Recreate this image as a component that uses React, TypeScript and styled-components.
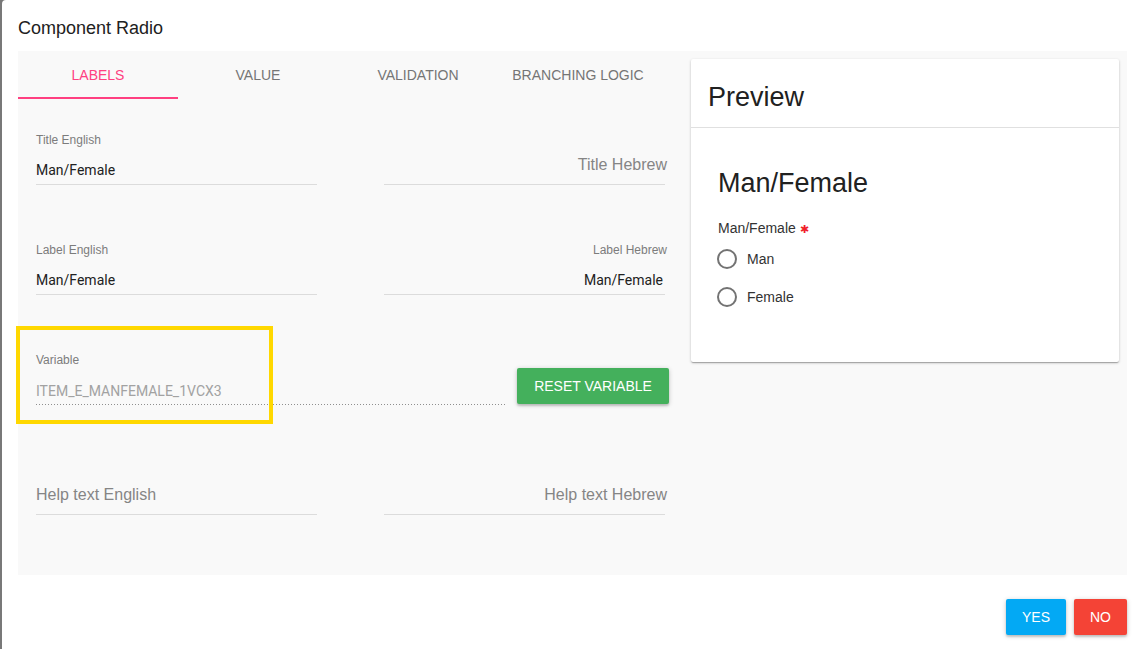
import React from "react";
import styled, { createGlobalStyle } from "styled-components";

const GlobalStyle = createGlobalStyle`
  html, body { margin: 0; padding: 0; background: #ffffff; }
  body { font-family: "Liberation Sans", Arial, sans-serif; }
  * { box-sizing: border-box; }
`;

const Screen = styled.div`
  display: flex;
  width: 1138px;
  height: 649px;
  background: #787878;
  overflow: hidden;
`;

const Dialog = styled.div`
  flex: 1;
  margin-left: 2px;
  background: #ffffff;
  border-top-left-radius: 4px;
  padding: 16px 11px 0 16px;
  display: flex;
  flex-direction: column;
`;

const DialogTitle = styled.div`
  font-size: 18px;
  line-height: 24px;
  color: #212121;
  margin-bottom: 11px;
`;

const Panel = styled.div`
  display: flex;
  align-items: flex-start;
  background: #f9f9f9;
  height: 524px;
`;

const LeftColumn = styled.div`
  width: 668px;
  display: flex;
  flex-direction: column;
`;

const TabBar = styled.div`
  display: flex;
  height: 48px;
`;

const Tab = styled.div<{ $active?: boolean }>`
  width: 160px;
  height: 48px;
  display: flex;
  align-items: center;
  justify-content: center;
  font-size: 14px;
  text-transform: uppercase;
  color: ${(p) => (p.$active ? "#ff4081" : "#757575")};
  border-bottom: 2px solid ${(p) => (p.$active ? "#ff4081" : "transparent")};
  padding-top: 2px;
`;

const Form = styled.div`
  padding: 0 0 0 18px;
  display: flex;
  flex-direction: column;
`;

const FieldRow = styled.div`
  height: 110px;
  padding-top: 33px;
  display: grid;
  grid-template-columns: 281px 281px;
  column-gap: 67px;
  align-items: start;
`;

const VariableRow = styled.div`
  height: 110px;
  padding-top: 33px;
  width: 633px;
  display: flex;
  align-items: flex-start;
  gap: 12px;
`;

const Field = styled.div<{ $rtl?: boolean }>`
  position: relative;
  display: flex;
  flex-direction: column;
  align-items: stretch;
  text-align: ${(p) => (p.$rtl ? "right" : "left")};
`;

const VariableField = styled(Field)`
  flex: 1;
`;

const FieldLabel = styled.div<{ $rtl?: boolean }>`
  height: 16px;
  font-size: 12px;
  line-height: 16px;
  color: #7c7c7c;
  margin-bottom: 12px;
  margin-right: ${(p) => (p.$rtl ? "-2px" : "0")};
`;

const InputBox = styled.div<{ $rtl?: boolean; $dotted?: boolean }>`
  height: 25px;
  display: flex;
  align-items: flex-end;
  justify-content: ${(p) => (p.$rtl ? "flex-end" : "flex-start")};
  border-bottom: ${(p) => (p.$dotted ? "none" : "1px solid #dcdcdc")};
  ${(p) =>
    p.$dotted
      ? `background-image: linear-gradient(to right, #8f8f8f 1px, transparent 1px);
         background-size: 3px 1px;
         background-repeat: repeat-x;
         background-position: left bottom;`
      : ""}
`;

const Value = styled.div<{ $muted?: boolean; $rtl?: boolean }>`
  font-family: Roboto, "Liberation Sans", Arial, sans-serif;
  font-size: 14px;
  line-height: 20px;
  padding-bottom: 4px;
  padding-right: ${(p) => (p.$rtl ? "2px" : "0")};
  color: ${(p) => (p.$muted ? "#a2a2a2" : "#212121")};
  white-space: nowrap;
`;

const Placeholder = styled.div<{ $rtl?: boolean }>`
  font-size: 16px;
  line-height: 20px;
  padding-bottom: 9px;
  margin-right: ${(p) => (p.$rtl ? "-2px" : "0")};
  color: #858585;
  white-space: nowrap;
`;

const Highlight = styled.div`
  position: absolute;
  left: -20px;
  top: -26px;
  width: 257px;
  height: 98px;
  border: 4px solid #ffd800;
  pointer-events: none;
`;

const ResetButton = styled.button`
  margin-top: 16px;
  height: 36px;
  width: 152px;
  border: none;
  border-radius: 2px;
  background: #44b05c;
  color: #ffffff;
  font-family: "Liberation Sans", Arial, sans-serif;
  font-size: 14px;
  text-transform: uppercase;
  padding: 0 16px;
  box-shadow: 0 1px 5px rgba(0, 0, 0, 0.2), 0 2px 2px rgba(0, 0, 0, 0.14);
`;

const PreviewCard = styled.div`
  width: 428px;
  margin: 8px 8px 0 5px;
  background: #ffffff;
  border-radius: 2px;
  box-shadow: 0 1px 3px rgba(0, 0, 0, 0.2), 0 1px 1px rgba(0, 0, 0, 0.14),
    0 2px 1px -1px rgba(0, 0, 0, 0.12);
`;

const PreviewHeader = styled.div`
  padding: 22px 17px 14px;
  font-size: 27px;
  line-height: 32px;
  color: #212121;
  border-bottom: 1px solid #e0e0e0;
`;

const PreviewBody = styled.div`
  padding: 39px 27px 46px;
  display: flex;
  flex-direction: column;
`;

const PreviewTitle = styled.div`
  font-size: 27px;
  line-height: 32px;
  color: #212121;
  margin-bottom: 17px;
`;

const QuestionLabel = styled.div`
  font-size: 14px;
  line-height: 20px;
  color: #333333;
  display: flex;
  align-items: center;
  gap: 4px;
`;

const Required = styled.span`
  color: #f0202a;
  font-size: 11px;
  line-height: 20px;
  padding-top: 3px;
`;

const RadioGroup = styled.div`
  margin-top: 1px;
  display: flex;
  flex-direction: column;
`;

const RadioRow = styled.label`
  height: 38px;
  display: flex;
  align-items: center;
  gap: 10px;
  font-size: 14px;
  color: #333333;
`;

const RadioCircle = styled.span`
  width: 20px;
  height: 20px;
  border-radius: 50%;
  border: 2px solid #737373;
  margin-left: -1px;
`;

const Footer = styled.div`
  display: flex;
  justify-content: flex-end;
  gap: 8px;
  padding-top: 24px;
`;

const ActionButton = styled.button<{ $color: string }>`
  height: 36px;
  border: none;
  border-radius: 2px;
  background: ${(p) => p.$color};
  color: #ffffff;
  font-family: "Liberation Sans", Arial, sans-serif;
  font-size: 14px;
  text-transform: uppercase;
  padding: 0 16px;
  box-shadow: 0 1px 5px rgba(0, 0, 0, 0.2), 0 2px 2px rgba(0, 0, 0, 0.14);
`;

const tabs = ["Labels", "Value", "Validation", "Branching logic"];

export default function App() {
  return (
    <>
      <GlobalStyle />
      <Screen>
        <Dialog>
          <DialogTitle>Component Radio</DialogTitle>
          <Panel>
            <LeftColumn>
              <TabBar>
                {tabs.map((t, i) => (
                  <Tab key={t} $active={i === 0}>
                    {t}
                  </Tab>
                ))}
              </TabBar>
              <Form>
                <FieldRow>
                  <Field>
                    <FieldLabel>Title English</FieldLabel>
                    <InputBox>
                      <Value>Man/Female</Value>
                    </InputBox>
                  </Field>
                  <Field $rtl>
                    <FieldLabel />
                    <InputBox $rtl>
                      <Placeholder $rtl>Title Hebrew</Placeholder>
                    </InputBox>
                  </Field>
                </FieldRow>
                <FieldRow>
                  <Field>
                    <FieldLabel>Label English</FieldLabel>
                    <InputBox>
                      <Value>Man/Female</Value>
                    </InputBox>
                  </Field>
                  <Field $rtl>
                    <FieldLabel $rtl>Label Hebrew</FieldLabel>
                    <InputBox $rtl>
                      <Value $rtl>Man/Female</Value>
                    </InputBox>
                  </Field>
                </FieldRow>
                <VariableRow>
                  <VariableField>
                    <FieldLabel>Variable</FieldLabel>
                    <InputBox $dotted>
                      <Value $muted>ITEM_E_MANFEMALE_1VCX3</Value>
                    </InputBox>
                    <Highlight />
                  </VariableField>
                  <ResetButton>Reset variable</ResetButton>
                </VariableRow>
                <FieldRow>
                  <Field>
                    <FieldLabel />
                    <InputBox>
                      <Placeholder>Help text English</Placeholder>
                    </InputBox>
                  </Field>
                  <Field $rtl>
                    <FieldLabel />
                    <InputBox $rtl>
                      <Placeholder $rtl>Help text Hebrew</Placeholder>
                    </InputBox>
                  </Field>
                </FieldRow>
              </Form>
            </LeftColumn>
            <PreviewCard>
              <PreviewHeader>Preview</PreviewHeader>
              <PreviewBody>
                <PreviewTitle>Man/Female</PreviewTitle>
                <QuestionLabel>
                  Man/Female <Required>✱</Required>
                </QuestionLabel>
                <RadioGroup>
                  <RadioRow>
                    <RadioCircle />
                    Man
                  </RadioRow>
                  <RadioRow>
                    <RadioCircle />
                    Female
                  </RadioRow>
                </RadioGroup>
              </PreviewBody>
            </PreviewCard>
          </Panel>
          <Footer>
            <ActionButton $color="#03a9f4">Yes</ActionButton>
            <ActionButton $color="#f44336">No</ActionButton>
          </Footer>
        </Dialog>
      </Screen>
    </>
  );
}
